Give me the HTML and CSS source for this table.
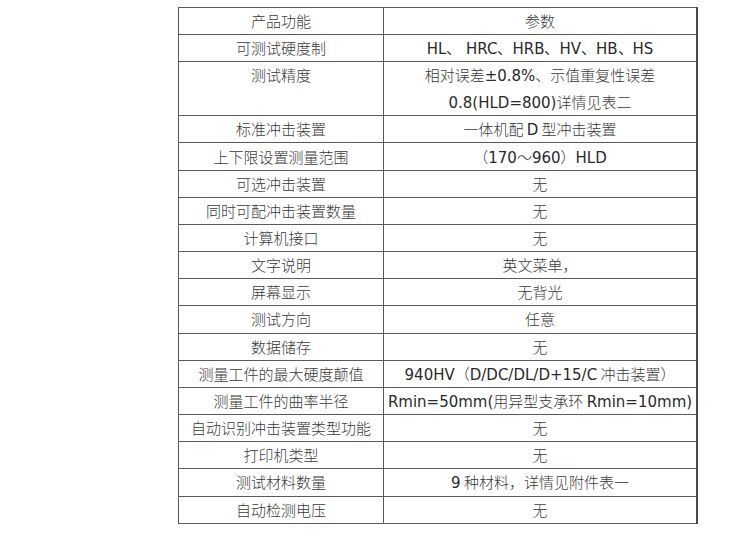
FILE: index.html
```html
<!DOCTYPE html>
<html lang="zh-CN">
<head>
<meta charset="utf-8">
<title>产品功能参数</title>
<link rel="stylesheet" href="styles.css">
</head>
<body>
<table class="spec">
  <tr><td class="name">产品功能</td><td class="val">参数</td></tr>
  <tr><td class="name">可测试硬度制</td><td class="val"><span class="lat">HL、 HRC、HRB、HV、HB、HS</span></td></tr>
  <tr class="double"><td class="name top">测试精度</td><td class="val">相对误差<span class="lat">±0.8%</span>、示值重复性误差<br><span class="lat">0.8(HLD=800)</span>详情见表二</td></tr>
  <tr><td class="name">标准冲击装置</td><td class="val">一体机配 <span class="lat">D</span> 型冲击装置</td></tr>
  <tr><td class="name">上下限设置测量范围</td><td class="val">（<span class="lat">170</span>～<span class="lat">960</span>）<span class="lat">HLD</span></td></tr>
  <tr><td class="name">可选冲击装置</td><td class="val">无</td></tr>
  <tr><td class="name">同时可配冲击装置数量</td><td class="val">无</td></tr>
  <tr><td class="name">计算机接口</td><td class="val">无</td></tr>
  <tr><td class="name">文字说明</td><td class="val">英文菜单，</td></tr>
  <tr><td class="name">屏幕显示</td><td class="val">无背光</td></tr>
  <tr><td class="name">测试方向</td><td class="val">任意</td></tr>
  <tr><td class="name">数据储存</td><td class="val">无</td></tr>
  <tr><td class="name">测量工件的最大硬度颠值</td><td class="val"><span class="lat">940HV</span>（<span class="lat">D/DC/DL/D+15/C</span> 冲击装置）</td></tr>
  <tr><td class="name">测量工件的曲率半径</td><td class="val"><span class="lat">Rmin=50mm(</span>用异型支承环 <span class="lat">Rmin=10mm)</span></td></tr>
  <tr><td class="name">自动识别冲击装置类型功能</td><td class="val">无</td></tr>
  <tr><td class="name">打印机类型</td><td class="val">无</td></tr>
  <tr><td class="name">测试材料数量</td><td class="val"><span class="lat">9</span> 种材料，详情见附件表一</td></tr>
  <tr><td class="name">自动检测电压</td><td class="val">无</td></tr>
</table>
</body>
</html>
```

FILE: styles.css
```css
html, body {
  background: #ffffff;
}
body {
  margin: 7px 0 0 178px;
  font-family: "Noto Sans CJK SC", sans-serif;
  font-size: 15px;
  font-weight: 300;
  color: #3a3a3a;
}
.spec {
  border-collapse: collapse;
  width: 520px;
  table-layout: fixed;
}
.spec td {
  border: 1px solid #5a5a5a;
  padding: 0;
  height: 26.16px;
  line-height: 20px;
  text-align: center;
  white-space: nowrap;
  vertical-align: middle;
}
.spec td.name {
  width: 204px;
}
.spec tr td:last-child {
  border-right: 2px solid #4a4a4a;
}
.spec td.top {
  vertical-align: top;
}
.double td {
  height: 53px;
  line-height: 26.5px;
}
.lat {
  font-family: "DejaVu Sans", Verdana, sans-serif;
  font-weight: 400;
  color: #2a2a2a;
  font-size: 15px;
  line-height: 1;
}
```
